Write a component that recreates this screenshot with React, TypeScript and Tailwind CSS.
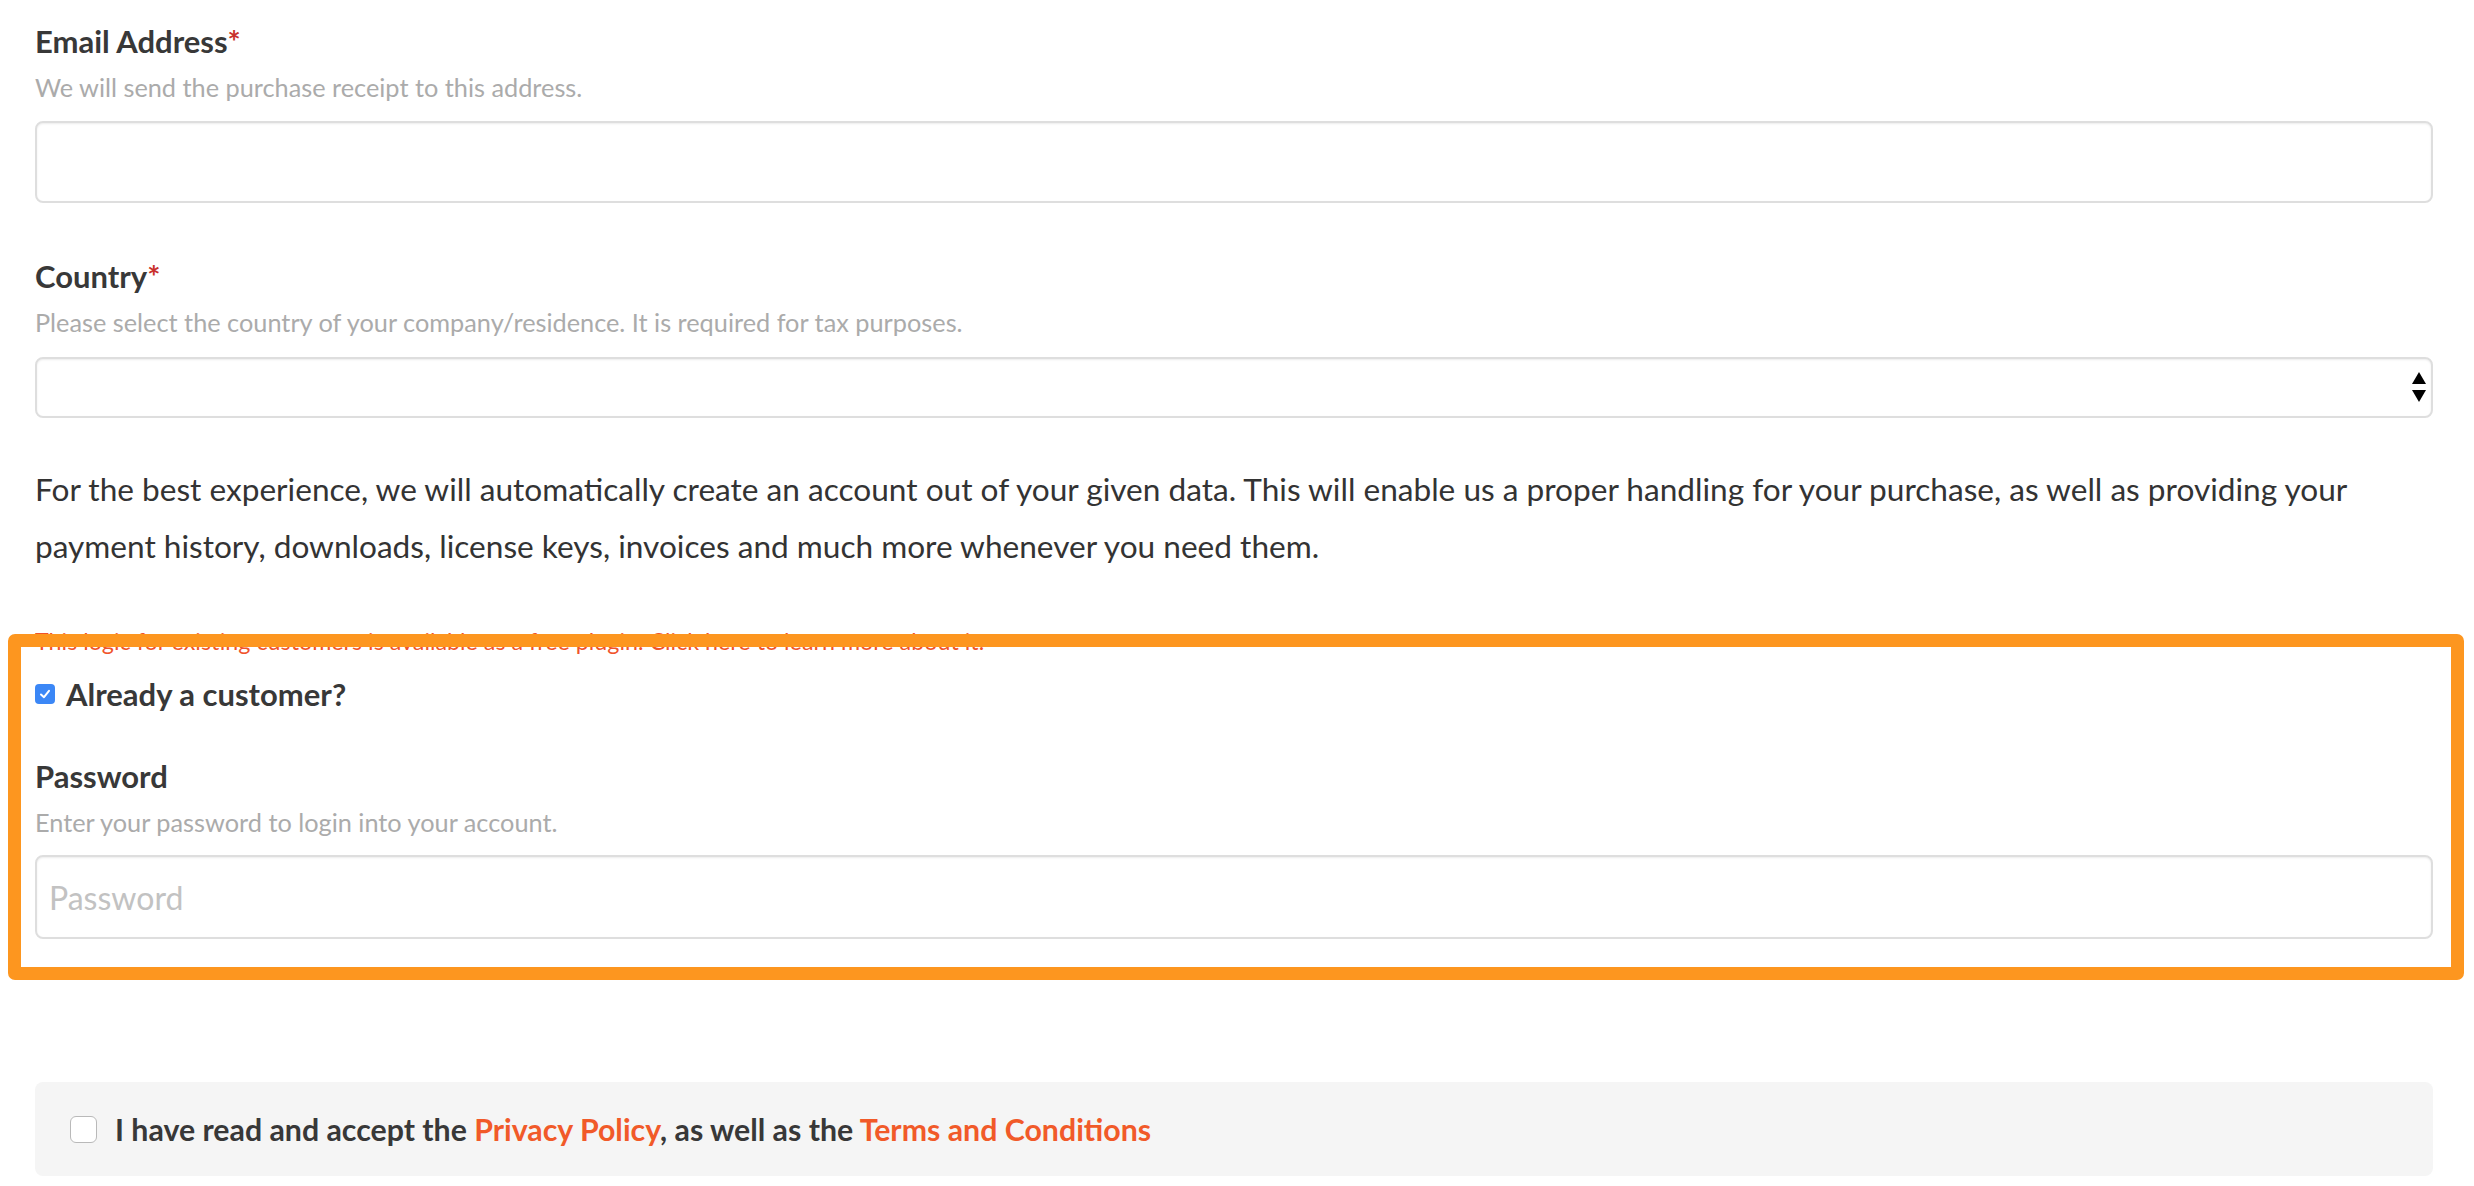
import React from 'react';

const font = { fontFamily: 'Lato, "Open Sans", sans-serif' };

function FieldLabel({ children, required }: { children: React.ReactNode; required?: boolean }) {
  return (
    <div className="text-[31px] font-bold leading-[38px] text-[#383838]">
      {children}
      {required && <span className="text-[#c9302c]">*</span>}
    </div>
  );
}

function FieldHint({ children }: { children: React.ReactNode }) {
  return <p className="mt-[11px] text-[25.3px] leading-[32px] text-[#ababab]">{children}</p>;
}

const inputClass =
  'block w-full rounded-[8px] border-2 border-[#dedede] bg-white px-[12px] text-[32px] text-[#333] shadow-[inset_0_1px_2px_rgba(0,0,0,0.08)] outline-none placeholder:text-[#c2c2c2]';

export default function App() {
  return (
    <div className="min-h-screen bg-white" style={font}>
      <div className="ml-[35px] mr-[41px] pt-[22px]">
        {/* Email */}
        <FieldLabel required>Email Address</FieldLabel>
        <FieldHint>We will send the purchase receipt to this address.</FieldHint>
        <input type="email" className={`${inputClass} mt-[18px] h-[82px]`} />

        {/* Country */}
        <div className="mt-[54px]">
          <FieldLabel required>Country</FieldLabel>
          <FieldHint>Please select the country of your company/residence. It is required for tax purposes.</FieldHint>
          <div className="relative mt-[19px]">
            <select className={`${inputClass} h-[61px] appearance-none`} defaultValue="">
              <option value=""></option>
            </select>
            <svg
              className="pointer-events-none absolute right-[7px] top-[15px] h-[31px] w-[14px]"
              viewBox="0 0 14 31"
            >
              <path d="M7 0 L14 12 L0 12 Z" fill="#000" />
              <path d="M0 18 L14 18 L7 30 Z" fill="#000" />
            </svg>
          </div>
        </div>

        <p className="mt-[43px] text-[31.6px] leading-[57px] text-[#333]">
          For the best experience, we will automatically create an account out of your given data. This will enable us a
          proper handling for your purchase, as well as providing your payment history, downloads, license keys, invoices
          and much more whenever you need them.
        </p>

        {/* Existing customer */}
        <div className="relative mt-[52px]">
          <a href="#" className="block text-[23.3px] leading-[28px] text-[#f0532b]">
            This logic for existing customers is available as a free plugin. Click here to learn more about it.
          </a>
          <label className="mt-[19px] flex items-center gap-[11px]">
            <span className="flex h-[20px] w-[20px] items-center justify-center rounded-[4px] bg-[#3b87f6]">
              <svg viewBox="0 0 12 12" className="h-[12px] w-[12px]">
                <path d="M2 6.5 L5 9.2 L10 2.8" fill="none" stroke="#fff" strokeWidth="2" strokeLinecap="round" strokeLinejoin="round" />
              </svg>
            </span>
            <span className="text-[31px] font-bold leading-[40px] text-[#383838]">Already a customer?</span>
          </label>

          <div className="mt-[43px]">
            <FieldLabel>Password</FieldLabel>
            <FieldHint>Enter your password to login into your account.</FieldHint>
            <input type="password" placeholder="Password" className={`${inputClass} mt-[17px] h-[84px]`} />
          </div>

          {/* highlight frame */}
          <div className="pointer-events-none absolute -left-[27px] -right-[31px] top-[7px] -bottom-[41px] rounded-[7px] border-[13px] border-[#fd961f]" />
        </div>

        {/* Terms */}
        <div className="mt-[143px] flex h-[94px] items-center rounded-[8px] bg-[#f5f5f5] pl-[35px]">
          <span className="h-[27px] w-[27px] rounded-[6px] border border-[#b9b9b9] bg-white" />
          <span className="ml-[18px] text-[30.3px] font-bold leading-[36px] text-[#383838]">
            I have read and accept the <a href="#" className="text-[#f15a29]">Privacy Policy</a>, as well as the{' '}
            <a href="#" className="text-[#f15a29]">Terms and Conditions</a>
          </span>
        </div>
      </div>
    </div>
  );
}
